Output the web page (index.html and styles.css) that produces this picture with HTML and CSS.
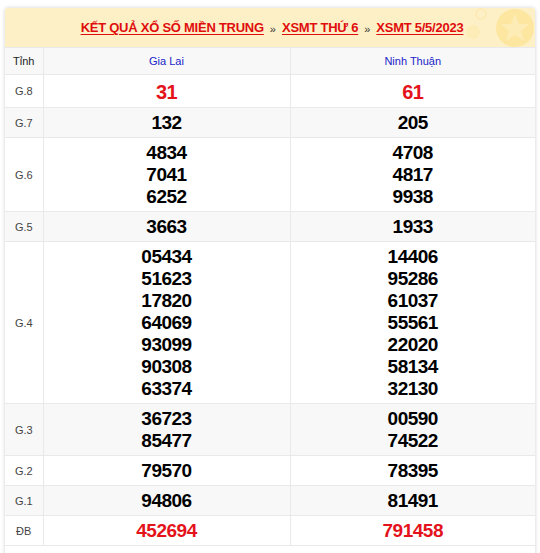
FILE: index.html
```html
<!DOCTYPE html>
<html lang="vi">
<head>
<meta charset="utf-8">
<link rel="stylesheet" href="styles.css">
</head>
<body>
<div class="card">
  <div class="head">
    <a href="#" class="lnk">KẾT QUẢ XỔ SỐ MIỀN TRUNG</a>
    <span class="sep">»</span>
    <a href="#" class="lnk">XSMT THỨ 6</a>
    <span class="sep">»</span>
    <a href="#" class="lnk">XSMT 5/5/2023</a>
    <svg class="deco" width="70" height="40" viewBox="0 0 70 40">
      <circle cx="50" cy="20" r="19" fill="#fde6a0"/>
      <polygon points="50,6 54,16 64,16 56,23 59,33 50,27 41,33 44,23 36,16 46,16" fill="#fdecb6"/>
      <circle cx="16" cy="6" r="5" fill="none" stroke="#fde8b0" stroke-width="1.5"/>
      <circle cx="8" cy="24" r="7" fill="#fdecb8"/>
    </svg>
  </div>
  <table class="res">
    <colgroup><col class="c0"><col class="c1"><col class="c2"></colgroup>
    <thead>
      <tr class="hr"><th class="lbl">Tỉnh</th><th class="prov">Gia Lai</th><th class="prov">Ninh Thuận</th></tr>
    </thead>
    <tbody>
      <tr><td class="lbl">G.8</td><td class="num red g8">31</td><td class="num red g8">61</td></tr>
      <tr class="alt"><td class="lbl">G.7</td><td class="num">132</td><td class="num">205</td></tr>
      <tr><td class="lbl">G.6</td><td class="num">4834<br>7041<br>6252</td><td class="num">4708<br>4817<br>9938</td></tr>
      <tr class="alt"><td class="lbl">G.5</td><td class="num">3663</td><td class="num">1933</td></tr>
      <tr><td class="lbl">G.4</td><td class="num">05434<br>51623<br>17820<br>64069<br>93099<br>90308<br>63374</td><td class="num">14406<br>95286<br>61037<br>55561<br>22020<br>58134<br>32130</td></tr>
      <tr class="alt"><td class="lbl">G.3</td><td class="num">36723<br>85477</td><td class="num">00590<br>74522</td></tr>
      <tr><td class="lbl">G.2</td><td class="num">79570</td><td class="num">78395</td></tr>
      <tr class="alt"><td class="lbl">G.1</td><td class="num">94806</td><td class="num">81491</td></tr>
      <tr><td class="lbl">ĐB</td><td class="num red">452694</td><td class="num red">791458</td></tr>
    </tbody>
  </table>
</div>
</body>
</html>
```
FILE: styles.css
```css
html, body {
  margin: 0;
  padding: 0;
  background: #fff;
}
body {
  padding: 8px 5px 0 5px;
  font-family: "Liberation Sans", Arial, sans-serif;
}
.card {
  width: 530px;
  background: #fff;
  box-shadow: 0 0 4px rgba(0, 0, 0, 0.18);
  border-radius: 3px 3px 0 0;
  padding-bottom: 12px;
}
.head {
  position: relative;
  height: 39px;
  background: #fdf0c6;
  display: flex;
  align-items: center;
  justify-content: center;
  gap: 6px;
  border-radius: 3px 3px 0 0;
  overflow: hidden;
  padding-left: 4px;
}
.lnk {
  position: relative;
  z-index: 1;
  color: #e00d0d;
  font-size: 13px;
  font-weight: bold;
  letter-spacing: -0.25px;
  text-decoration: underline;
  text-underline-offset: 2px;
}
.sep {
  position: relative;
  z-index: 1;
  color: #333;
  font-size: 11px;
  margin-top: 2px;
}
.deco {
  position: absolute;
  right: 0;
  top: 0;
}
.res {
  width: 530px;
  border-collapse: collapse;
  table-layout: fixed;
}
.c0 { width: 38px; }
.c1 { width: 247px; }
.c2 { width: 245px; }
.res th, .res td {
  border: 1px solid #e9e9e9;
  text-align: center;
  vertical-align: middle;
}
.res tr > :first-child { border-left: none; }
.res tr > :last-child { border-right: none; }
.hr {
  background: #f8f8f8;
}
.hr th {
  height: 26px;
  padding: 0;
  font-weight: normal;
  font-size: 11px;
}
.hr .lbl { color: #222; }
.prov { color: #1a24c8; }
.alt { background: #f8f8f8; }
.lbl {
  font-size: 11px;
  color: #444;
  padding: 0;
}
.num {
  font-size: 19px;
  font-weight: bold;
  color: #000;
  letter-spacing: -0.5px;
  line-height: 22px;
  padding: 4px 0 3px;
}
.red { color: #e4131b; }
.g8 {
  font-size: 20px;
  padding: 6px 0 4px;
}
```
